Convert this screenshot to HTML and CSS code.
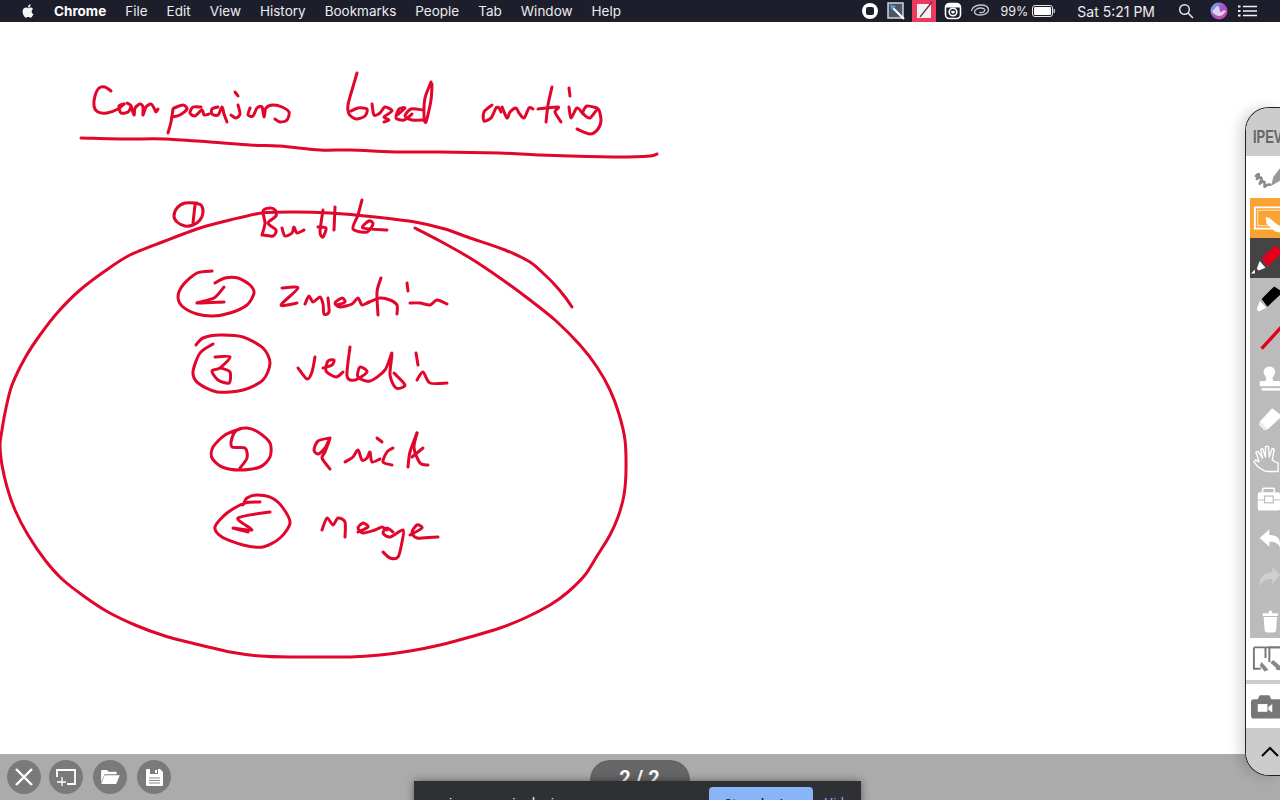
FILE: index.html
```html
<!DOCTYPE html>
<html lang="en">
<head>
<meta charset="utf-8">
<title>Comparison based sorting</title>
<link rel="stylesheet" href="styles.css">
</head>
<body>
<header class="menubar">
  <nav class="menu-left">
    <svg class="apple" viewBox="0 0 24 24"><path d="M18.71 19.5c-.83 1.24-1.71 2.45-3.05 2.47-1.34.03-1.77-.79-3.29-.79-1.53 0-2 .77-3.27.82-1.31.05-2.3-1.32-3.14-2.53C4.25 17 2.94 12.45 4.7 9.39c.87-1.52 2.43-2.48 4.12-2.51 1.28-.02 2.5.87 3.29.87.78 0 2.26-1.07 3.81-.91.65.03 2.47.26 3.64 1.98-.09.06-2.17 1.28-2.15 3.81.03 3.02 2.65 4.03 2.68 4.04-.03.07-.42 1.44-1.38 2.83M13 3.5c.73-.83 1.94-1.46 2.94-1.5.13 1.17-.34 2.35-1.04 3.19-.69.85-1.83 1.51-2.95 1.42-.15-1.15.41-2.35 1.05-3.11z"/></svg>
    <span class="menu-app">Chrome</span><span>File</span><span>Edit</span><span>View</span><span>History</span><span>Bookmarks</span><span>People</span><span>Tab</span><span>Window</span><span>Help</span>
  </nav>
  <div class="menu-right">
    <svg class="st" width="18" height="18" viewBox="0 0 18 18"><circle cx="9" cy="9" r="8" fill="#fff"/><rect x="5" y="5" width="8" height="8" rx="2" fill="#1c1e2b"/></svg>
    <svg class="st-box" width="18" height="18" viewBox="0 0 18 18"><rect x="1" y="1" width="15" height="15" fill="#4d5664" stroke="#cfd3d8" stroke-width="1.5"/><path d="M6 6l11 11" stroke="#fff" stroke-width="2.2"/><path d="M3 3l6 1-4 4z" fill="#4fa8e0"/></svg>
    <svg class="st-pink" width="24" height="22" viewBox="0 0 24 22"><rect width="24" height="22" fill="#ea3a5e"/><rect x="5" y="4" width="14" height="14" fill="#f3f1ef"/><path d="M8 17L20 2" stroke="#6d3040" stroke-width="1.3"/></svg>
    <svg class="st" width="18" height="18" viewBox="0 0 18 18"><rect x="1.500" y="1.500" width="15" height="15" rx="4" fill="none" stroke="#fff" stroke-width="1.600"/><rect x="2" y="2" width="14" height="3.500" fill="#fff"/><circle cx="9" cy="10" r="3.800" fill="none" stroke="#fff" stroke-width="1.600"/><path d="M9 12l-2-2c0-1.500 2-1.500 2-.5 0-1 2-1 2 .5z" fill="#fff"/></svg>
    <svg class="st-swirl" width="20" height="16" viewBox="0 0 20 16"><path d="M1.500 8c0-3 4-6 9-6s8 2 8 5-4 5-8 5-6-1-6-3 3-4 6-4 5 1 4 3-4 2-5 1" fill="none" stroke="#c4c6cb" stroke-width="1.400"/></svg>
    <span class="pct">99%</span>
    <svg class="batt" width="24" height="12" viewBox="0 0 24 12"><rect x=".5" y=".5" width="20" height="11" rx="2.500" fill="none" stroke="#e8e8ea"/><rect x="2" y="2" width="17" height="8" rx="1" fill="#fff"/><rect x="21.500" y="4" width="1.500" height="4" fill="#b9bcc2"/></svg>
    <span class="clock">Sat 5:21 PM</span>
    <svg class="search" width="16" height="16" viewBox="0 0 16 16"><circle cx="6.500" cy="6.500" r="4.800" fill="none" stroke="#e8e8ea" stroke-width="1.400"/><path d="M10 10l5 5" stroke="#e8e8ea" stroke-width="1.500"/></svg>
    <svg class="siri" width="18" height="18" viewBox="0 0 18 18"><defs><linearGradient id="sg" x1="0" y1="0" x2="1" y2="1"><stop offset="0" stop-color="#5ec6ec"/><stop offset=".5" stop-color="#a64fd0"/><stop offset="1" stop-color="#e14a86"/></linearGradient></defs><circle cx="9" cy="9" r="8.500" fill="url(#sg)"/><path d="M2 9c3-2 4-5 6-5 2 0 1 6 3 6s2-3 5-1c-2 3-4 5-7 5S3 11 2 9z" fill="#e9e4f4" opacity=".85"/></svg>
    <svg class="list" width="19" height="12" viewBox="0 0 19 12"><path d="M5 1.500H19M5 6H19M5 10.500H19" stroke="#f3f3f3" stroke-width="1.500"/><path d="M0 1.500h2.500M0 6h2.500M0 10.500h2.500" stroke="#f3f3f3" stroke-width="2"/></svg>
  </div>
</header>

<main class="board">
  <svg class="ink" viewBox="0 22 1280 732" aria-label="Handwritten notes: Comparison based sorting. 1 Bubble, 2 Insertion, 3 Selection, 4 Quick, 5 Merge">
    <g class="strokes">
      <!-- title -->
      <polyline points="111,91 105,87 99,88 95,96 94,106 98,112 107,113 118,109 124,104"/>
      <polyline points="124,104 119,106 121,113 128,112 131,106 127,103"/>
      <polyline points="131,106 134,115 135,108 140,104 143,107 143,115 146,107 151,104 154,108 156,112 158,109"/>
      <polyline points="173,109 171,122 168,133"/>
      <polyline points="174,108 183,105 187,109 180,115 172,117"/>
      <polyline points="201,107 193,107 190,113 195,116 202,110 204,115 209,114"/>
      <polyline points="218,107 212,109 212,114 218,115 222,107 224,114 227,122"/>
      <polyline points="235,92 238,96"/>
      <polyline points="238,105 240,114 236,118 231,115"/>
      <polyline points="250,108 248,115 253,116 257,108 262,107 264,117 266,108 273,105 282,107 289,112 287,120 280,122 275,119"/>
      <polyline points="357,73 352,90 348,105 349,114 356,119 365,116 367,109 358,108 351,111"/>
      <polyline points="372,104 374,115 380,113 385,107 392,111 384,117 389,120 384,122"/>
      <polyline points="397,115 405,108 399,109 396,118 404,120 412,114"/>
      <polyline points="431,82 425,98 424,116 426,122 431,100 432,84"/>
      <polyline points="423,110 411,109 405,116 412,120 424,120"/>
      <polyline points="492,105 484,112 484,121 491,118 496,108 499,108 501,112"/>
      <polyline points="502,107 507,118 510,112 516,108 519,113 524,118 529,108 533,109"/>
      <polyline points="552,87 548,105 546,122"/>
      <polyline points="538,109 558,107 555,112 561,122"/>
      <polyline points="569,88 570,96"/>
      <polyline points="569,107 571,118 577,108 583,114"/>
      <polyline points="597,108 587,106 583,113 590,118 598,109 601,120 598,129 590,134 577,129"/>
      <polyline points="81,138 125,139 165,139 210,142 250,145 280,146 320,150 350,150 400,152 440,152 500,153 540,155 570,156 620,157 650,156 657,154"/>
      <!-- big loop -->
      <polyline points="415,228 440,241 470,258 500,278 530,300 555,320 580,345 597,367 610,390 619,414 625,440 626,470 624,495 618,517 610,535 597,556 585,575 568,592 550,605 525,618 500,628 470,637 440,645 410,651 380,655 350,657 320,657 290,657 260,656 230,652 200,645 165,636 135,625 108,612 85,597 62,579 45,560 28,535 15,510 7,487 2,465 0,445 2,430 6,408 12,385 25,358 40,335 58,312 80,290 105,271 130,255 165,241 200,228 230,220 262,213 295,212 330,213 375,217 415,222 445,229 470,238 505,250 530,262 545,275 555,285 565,297 572,307"/>
      <!-- 1 -->
      <polyline points="197,203 185,203 177,208 174,216 177,222 185,226 193,225 200,220 203,212 201,205 194,203"/>
      <polyline points="195,205 193,223"/>
      <!-- Bubble -->
      <polyline points="262,235 265,223 263,211 270,208 275,210 276,216 268,223 276,230 273,236 262,235"/>
      <polyline points="282,228 285,236 292,233 294,227 297,233 304,230"/>
      <polyline points="323,210 320,232 323,237 326,228 318,227"/>
      <polyline points="335,207 334,230"/>
      <polyline points="362,200 358,215 353,229 367,232 373,224 369,221 363,228 387,230"/>
      <!-- 2 -->
      <polyline points="212,271 197,273 183,285 178,297 183,307 197,314 213,316 230,313 247,305 254,293 250,285 238,278 225,278 215,283"/>
      <polyline points="224,287 214,298 197,303 224,302"/>
      <polyline points="282,288 298,288 281,305 297,303"/>
      <polyline points="305,304 309,296 313,302 320,297 323,304 324,314 329,312 328,298"/>
      <polyline points="337,305 345,302 342,298 335,303 340,307 352,304 358,298 362,305 369,302"/>
      <polyline points="381,278 377,292 378,315"/>
      <polyline points="367,303 380,298 390,300 397,305 397,314"/>
      <polyline points="407,283 408,291"/>
      <polyline points="410,303 420,303 430,305 437,300 447,304"/>
      <!-- 3 -->
      <polyline points="213,344 200,353 193,372 198,383 217,392 243,390 263,380 270,363 263,348 243,337 220,335 203,338 196,345"/>
      <polyline points="215,357 230,357 220,368 212,371 218,380 229,383 230,372 221,368"/>
      <polyline points="315,357 312,372 307,379 298,368"/>
      <polyline points="323,368 332,365 334,360 328,361 326,371 336,377 343,372"/>
      <polyline points="350,347 347,376 355,380 367,372 360,367 358,377 370,381 385,370 392,353 390,375 396,388 405,385 394,373"/>
      <polyline points="416,353 418,365"/>
      <polyline points="417,380 423,372 430,383 447,383"/>
      <!-- 4 -->
      <polyline points="240,429 225,435 213,447 212,458 222,467 240,470 260,467 270,457 270,443 258,432 247,428 237,430 232,438 232,447 245,448 247,458 240,468"/>
      <polyline points="330,438 318,441 314,450 318,454 325,448 330,438 325,452 322,458 330,469"/>
      <polyline points="345,462 353,457 358,450 362,460 367,458 370,452 372,462 380,459"/>
      <polyline points="377,438 382,442"/>
      <polyline points="393,448 387,452 383,462 392,465"/>
      <polyline points="417,433 410,452 408,467"/>
      <polyline points="417,433 414,448 420,463 428,465"/>
      <polyline points="412,457 423,448"/>
      <!-- 5 -->
      <polyline points="260,502 245,503 227,513 215,527 222,537 243,545 263,547 280,538 290,523 283,508 272,498 257,495 247,498 243,505"/>
      <polyline points="270,512 238,518 252,530 233,528 248,532"/>
      <polyline points="322,530 327,518 333,525 338,518 345,522 345,537"/>
      <polyline points="358,532 368,527 363,523 358,528 363,533 375,530 382,527 387,530"/>
      <polyline points="393,532 387,528 383,533 390,537 403,530 402,542 398,557 390,558 383,552"/>
      <polyline points="410,535 422,528 417,525 412,532 417,538 438,537"/>
    </g>
  </svg>

  <aside class="toolbar">
    <div class="tb-brand"><span class="tb-brand-text">IPEVO</span></div>
    <div class="tb-sec tb-white"><svg width="30" height="26" viewBox="0 0 30 26"><path d="M5 12Q9 8 8 12L6 15Q11 12 11 15L9 20Q14 16 14 19L14 23Q18 20 20 21" fill="none" stroke="#8a8a8a" stroke-width="2.600" stroke-linejoin="round" stroke-linecap="round"/><path d="M21 22l2-9 7-9v13z" fill="#999"/></svg></div>
    <div class="tb-sec tb-orange"><svg width="30" height="32" viewBox="0 0 30 32"><path d="M30 5H4v22h26" fill="none" stroke="#fff" stroke-width="2"/><path d="M30 8H7v16h23" fill="none" stroke="#fff" stroke-width=".8"/><path d="M15 15l4 1 11 9v6l-5-1-9-8z" fill="#fff"/></svg></div>
    <div class="tb-sec tb-dark"><svg width="30" height="34" viewBox="0 0 30 34"><path d="M11 17L25 4l5 4v6L17 26z" fill="#e2001a"/><path d="M9 20l6 7-7 3-2-2z" fill="#fff"/><path d="M0 33l4-4v4z" fill="#fff"/></svg></div>
    <div class="tb-gray">
      <div class="tool"><svg width="30" height="32" viewBox="0 0 30 32"><path d="M11 17L24 4l6 4v5L17 25z" fill="#000"/><path d="M9 19l7 7-8 4-2-2z" fill="#fff"/></svg></div>
      <div class="tool"><svg width="30" height="30" viewBox="0 0 30 30"><path d="M11 26L31 4" stroke="#e2001a" stroke-width="3.500"/></svg></div>
      <div class="tool"><svg width="30" height="30" viewBox="0 0 30 30"><circle cx="19" cy="9" r="6" fill="#fff"/><path d="M16 13h6l1 6h-8z" fill="#fff"/><rect x="9" y="18" width="21" height="5.500" rx="1" fill="#fff"/><rect x="11" y="25.500" width="19" height="2.500" fill="#fff"/></svg></div>
      <div class="tool"><svg width="30" height="30" viewBox="0 0 30 30"><path d="M9 19L22 5l8 6v4L17 27z" fill="#fff"/><path d="M9 19l8 8-3 1-6-6z" fill="#ececec"/></svg></div>
      <div class="tool"><svg width="30" height="30" viewBox="0 0 30 30"><path d="M8 17L5 9l2-1 5 7-2-9 2-1 3 9V3l3 0 1 11 3-9 2 1-2 11 3 2 3 1v9H17c-4 0-8-4-10-5L3 19l2-2 3 2z" fill="none" stroke="#fff" stroke-width="1.400" stroke-linejoin="round"/></svg></div>
      <div class="tool"><svg width="30" height="30" viewBox="0 0 30 30"><path d="M12 9V6c0-1 1-1 1-1h10c1 0 1 1 1 1v3" fill="none" stroke="#fff" stroke-width="1.600"/><rect x="7" y="9" width="23" height="19" rx="2" fill="#fff"/><path d="M7 17h23" stroke="#bbb" stroke-width="1"/><rect x="14" y="13" width="9" height="7" fill="#fff" stroke="#bbb" stroke-width="1.200"/></svg></div>
      <div class="tool"><svg width="30" height="30" viewBox="0 0 30 30"><path d="M9 15L19 6v6c7 0 11 3 11 9v4c-1-4-6-6-9-6h-2v5z" fill="#fff"/></svg></div>
      <div class="tool"><svg width="30" height="30" viewBox="0 0 30 30"><path d="M30 12L22 4v5C14 9 9 14 8 24c3-6 8-8 14-8v5z" fill="#cfcfcf"/></svg></div>
      <div class="tool"><svg width="30" height="30" viewBox="0 0 30 30"><circle cx="20" cy="9" r="1.800" fill="#fff"/><rect x="12" y="10" width="16" height="3" rx="1" fill="#fff"/><path d="M13 14h14l-1 13c0 2-1 3-3 3h-6c-2 0-3-1-3-3z" fill="#fff"/></svg></div>
    </div>
    <div class="tb-sec tb-book"><svg width="30" height="30" viewBox="0 0 30 30"><path d="M3 3h27M3 3v22h7M15 3v11" fill="none" stroke="#777" stroke-width="2"/><path d="M30 3h-11v15M30 25h-4" fill="none" stroke="#777" stroke-width="2"/><path d="M11 18l7 8-4 2-5-6z" fill="#888"/><path d="M20 19l9 8 1-1v-4l-7-6z" fill="#888"/></svg></div>
    <div class="tb-sec tb-cam"><svg width="30" height="26" viewBox="0 0 30 26"><path d="M7 6l2-4h10l2 4h9v20H3c-2 0-3-1-3-3V9c0-2 1-3 3-3z" fill="#777"/><rect x="7" y="11" width="10" height="8" fill="#fff"/><path d="M18 14l4-3v9l-4-3z" fill="#fff"/></svg></div>
    <div class="tb-foot"><svg width="18" height="11" viewBox="0 0 18 11"><path d="M1 10l8-8 8 8" fill="none" stroke="#000" stroke-width="2"/></svg></div>
  </aside>
</main>

<footer class="dock">
  <div class="dock-btns">
    <button class="round"><svg width="20" height="20" viewBox="0 0 20 20"><path d="M2 2l16 16M18 2L2 18" stroke="#fff" stroke-width="2.400"/></svg></button>
    <button class="round round-tight"><svg width="22" height="22" viewBox="0 0 22 22"><path d="M2 11V4h18v14h-8" fill="none" stroke="#fff" stroke-width="1.800"/><path d="M7 11v9M2 16h9" fill="none" stroke="#fff" stroke-width="1.300"/></svg></button>
    <button class="round"><svg width="20" height="16" viewBox="0 0 22 18"><path d="M1 3c0-1 .5-2 1.500-2h5l2 2h8c1 0 1 1 1 1v2H5L1 15z" fill="#fff"/><path d="M5 7h17l-4 10H1z" fill="#fff"/></svg></button>
    <button class="round"><svg width="19" height="19" viewBox="0 0 19 19"><path d="M1 2c0-.5.500-1 1-1h13l3 3v13c0 .5-.5 1-1 1H2c-.5 0-1-.5-1-1z" fill="#fff"/><rect x="5" y="1" width="8" height="5" fill="#7a7a7a"/><rect x="10" y="2" width="2" height="3" fill="#fff"/><path d="M4 10h11M4 12.500h11M4 15h11" stroke="#8a8a8a" stroke-width="1.200"/></svg></button>
  </div>
  <div class="pager">2 / 2</div>
  <div class="share-bar">
    <span class="share-text">app.ipevo.com is sharing your screen</span>
    <button class="share-stop">Stop sharing</button>
    <span class="share-hide">Hide</span>
  </div>
</footer>
<script src="smooth.js"></script>
</body>
</html>
```
FILE: styles.css
```css
* { box-sizing: border-box; }
html, body { margin: 0; height: 100%; }
body {
  width: 1280px; height: 800px; overflow: hidden;
  display: flex; flex-direction: column;
  background: #fff;
  font-family: "Inter", "Liberation Sans", sans-serif;
}
.menubar {
  height: 22px; flex: none;
  display: flex; justify-content: space-between; align-items: center;
  background: #1c1e2b; color: #ececee;
  font-size: 13.5px;
}
.menu-left { display: flex; align-items: center; gap: 19px; padding-left: 20px; }
.apple { width: 16px; height: 16px; fill: #f4f4f4; margin-right: -1px; }
.menu-app { font-weight: 700; color: #fff; }
.menu-right { display: flex; align-items: center; padding-right: 23px; }
.st { margin-right: 8px; }
.st-box { margin-right: 7px; }
.st-pink { margin-right: 8px; }
.st-swirl { margin-right: 11px; }
.pct { margin-right: 4px; font-size: 12.5px; }
.batt { margin-right: 21px; }
.clock { margin-right: 23px; font-size: 14px; }
.search { margin-right: 16px; }
.siri { margin-right: 10px; }
.board { position: relative; flex: 1; min-height: 0; }
.ink { position: absolute; left: 0; top: 0; width: 1280px; height: 732px; }
.strokes polyline, .strokes path {
  fill: none; stroke: #e1062c; stroke-width: 3;
  stroke-linecap: round; stroke-linejoin: round;
}
.toolbar {
  position: absolute; right: 0; top: 85px; bottom: -22px; width: 35px; z-index: 1;
  display: flex; flex-direction: column;
  background: #fff;
  border: 1px solid #222; border-right: 0;
  border-radius: 24px 0 0 24px;
  overflow: hidden;
  box-shadow: -6px 0 12px rgba(0,0,0,.14);
}
.tb-brand {
  height: 48px; flex: none; background: #ccc; color: #666;
  padding: 19px 0 0 7px; white-space: nowrap;
}
.tb-brand-text {
  display: inline-block;
  font: 700 19px/18px "Liberation Sans", sans-serif;
  transform: scaleX(.68); transform-origin: left;
}
.tb-sec { flex: none; display: flex; align-items: center; padding-left: 5px; }
.tb-white { height: 41px; margin-bottom: 1px; }
.tb-orange { height: 40px; margin-left: 4px; padding-left: 1px; background: #faa332; }
.tb-dark { height: 40px; margin-left: 4px; padding-left: 1px; background: #444; }
.tb-gray { margin-left: 4px; background: #bbb; height: 360px; padding-left: 1px; display: flex; flex-direction: column; }
.tool { height: 40px; display: flex; align-items: center; }
.tb-book { height: 46px; border-bottom: 4px solid #ccc; }
.tb-cam { height: 44px; }
.tb-foot { flex: 1; background: #ccc; display: flex; align-items: center; padding-left: 15px; }
.dock {
  position: relative; height: 46px; flex: none;
  background: #ababab;
  display: flex; align-items: center;
}
.dock-btns { display: flex; gap: 10px; padding-left: 7px; }
.round {
  width: 34px; height: 34px; padding: 0; border: 0; border-radius: 50%;
  background: #7a7a7a; display: flex; align-items: center; justify-content: center;
}
.round-tight { margin-left: -2px; }
.pager {
  position: absolute; left: 590px; top: 6px; width: 100px; height: 40px;
  background: #666; border-radius: 20px 20px 0 0;
  color: #fff; font: 700 20px/36px "Roboto", sans-serif;
  letter-spacing: 1px; word-spacing: -2px; text-align: center;
}
.share-bar {
  position: absolute; left: 414px; top: 27px; width: 447px; height: 50px;
  background: #2f3033; box-shadow: 0 0 8px rgba(0,0,0,.45);
  color: #fff; font: 400 13px "Roboto", sans-serif;
}
.share-text { position: absolute; left: 10px; top: 14px; white-space: nowrap; }
.share-stop {
  position: absolute; left: 295px; top: 6px; width: 104px; height: 36px; border: 0;
  background: #8ab4f8; border-radius: 4px; color: #202124; font: 500 13px "Roboto", sans-serif;
  padding: 0 0 4px;
}
.share-hide { position: absolute; left: 410px; top: 14px; color: #8ab4f8; }
```
FILE: smooth.js
```js
// Turns the sampled pen points of each ink stroke into a smooth curve.
document.querySelectorAll('.strokes polyline').forEach(function (line) {
  var nums = line.getAttribute('points').trim().split(/[\s,]+/).map(Number);
  var pts = [];
  for (var i = 0; i < nums.length; i += 2) pts.push([nums[i], nums[i + 1]]);
  var d = 'M' + pts[0][0] + ' ' + pts[0][1];
  var k = 0.14;
  for (var j = 0; j < pts.length - 1; j++) {
    var p0 = pts[Math.max(j - 1, 0)], p1 = pts[j], p2 = pts[j + 1], p3 = pts[Math.min(j + 2, pts.length - 1)];
    d += ' C' + (p1[0] + (p2[0] - p0[0]) * k).toFixed(1) + ' ' + (p1[1] + (p2[1] - p0[1]) * k).toFixed(1) +
      ' ' + (p2[0] - (p3[0] - p1[0]) * k).toFixed(1) + ' ' + (p2[1] - (p3[1] - p1[1]) * k).toFixed(1) +
      ' ' + p2[0] + ' ' + p2[1];
  }
  var path = document.createElementNS('http://www.w3.org/2000/svg', 'path');
  path.setAttribute('d', d);
  line.parentNode.replaceChild(path, line);
});
```
